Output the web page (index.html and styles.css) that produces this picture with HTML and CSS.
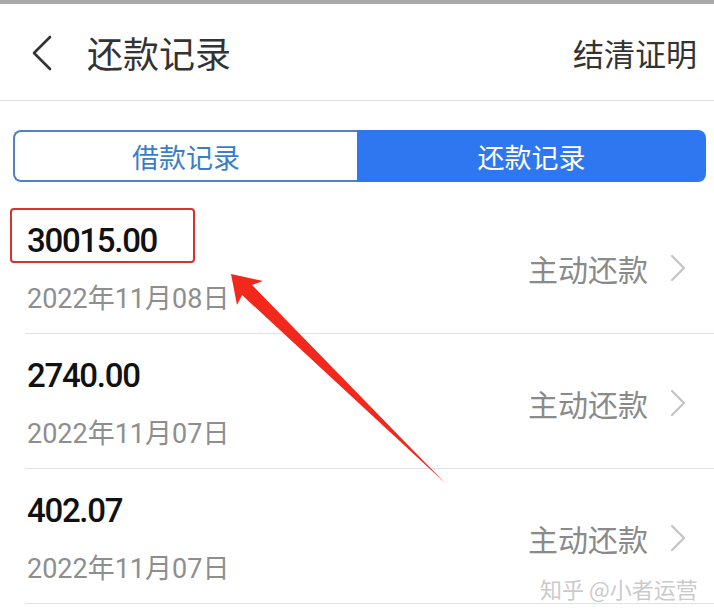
FILE: index.html
```html
<!DOCTYPE html>
<html lang="zh-CN">
<head>
<meta charset="utf-8">
<title>还款记录</title>
<link rel="stylesheet" href="styles.css">
</head>
<body>
<div class="page">
  <div class="topstrip"></div>
  <header class="header">
    <svg class="back" width="22" height="36" viewBox="0 0 22 36"><polyline points="19,2 3,18 19,34" fill="none" stroke="#333" stroke-width="2.6" stroke-linecap="round" stroke-linejoin="round"/></svg>
    <h1 class="title">还款记录</h1>
    <span class="action">结清证明</span>
  </header>
  <div class="tabs">
    <div class="tab tab-off">借款记录</div>
    <div class="tab tab-on">还款记录</div>
  </div>
  <ul class="list">
    <li class="row">
      <div class="info">
        <div class="amount">30015.00<span class="mark"></span></div>
        <div class="date">2022年11月08日</div>
      </div>
      <div class="type">主动还款<svg class="chev" width="18" height="28" viewBox="0 0 18 28"><polyline points="3,2 15,14 3,26" fill="none" stroke="#c3c3c3" stroke-width="2.2" stroke-linecap="round" stroke-linejoin="round"/></svg></div>
    </li>
    <li class="row">
      <div class="info">
        <div class="amount">2740.00</div>
        <div class="date">2022年11月07日</div>
      </div>
      <div class="type">主动还款<svg class="chev" width="18" height="28" viewBox="0 0 18 28"><polyline points="3,2 15,14 3,26" fill="none" stroke="#c3c3c3" stroke-width="2.2" stroke-linecap="round" stroke-linejoin="round"/></svg></div>
    </li>
    <li class="row">
      <div class="info">
        <div class="amount">402.07</div>
        <div class="date">2022年11月07日</div>
      </div>
      <div class="type">主动还款<svg class="chev" width="18" height="28" viewBox="0 0 18 28"><polyline points="3,2 15,14 3,26" fill="none" stroke="#c3c3c3" stroke-width="2.2" stroke-linecap="round" stroke-linejoin="round"/></svg></div>
    </li>
  </ul>
  <div class="watermark">知乎 @小者运营</div>
  <svg class="arrow" width="714" height="615" viewBox="0 0 714 615"><polygon points="231,274 263,281 252,285 445,483 242,295 237,305" fill="#f2281d"/></svg>
</div>
</body>
</html>
```
FILE: styles.css
```css
* { box-sizing: border-box; }
html, body { margin: 0; padding: 0; background: #fff; }
body {
  font-family: Roboto, "Noto Sans CJK SC", sans-serif;
  color: #333;
}
.page {
  position: relative;
  width: 714px;
  height: 615px;
  overflow: hidden;
}
.topstrip {
  height: 4px;
  background: #a9a9a9;
}
.header {
  height: 97px;
  display: flex;
  align-items: center;
  padding: 0 17px 0 31px;
  border-bottom: 1px solid #dedede;
}
.back { display: block; margin-top: 2px; }
.title {
  margin: 0 0 0 34px;
  font-size: 36px;
  font-weight: 400;
  color: #333;
  flex: 1;
}
.action {
  font-size: 31px;
  color: #333;
}
.tabs {
  display: flex;
  height: 52px;
  margin: 29px 8px 0 13px;
}
.tab {
  flex: 1;
  display: flex;
  align-items: center;
  justify-content: center;
  font-size: 27px;
}
.tab-off {
  flex: 0 0 344px;
  border: 2px solid #4f84c2;
  border-right: none;
  border-radius: 8px 0 0 8px;
  color: #3c7dc8;
  background: #fff;
}
.tab-on {
  background: #2f77f1;
  color: #fff;
  border-radius: 0 8px 8px 0;
}
.list {
  list-style: none;
  margin: 17px 0 0 25px;
  padding: 0;
}
.row {
  height: 135px;
  display: flex;
  align-items: center;
  justify-content: space-between;
  padding: 22px 27px 18px 2px;
  border-bottom: 1px solid #e2e2e2;
}
.info { display: flex; flex-direction: column; }
.amount {
  position: relative;
  font-size: 33px;
  font-weight: 500;
  line-height: 40px;
  letter-spacing: -1.3px;
  color: #111;
}
.mark {
  position: absolute;
  left: -17px;
  top: -13px;
  width: 185px;
  height: 55px;
  border: 2px solid #d9312b;
  border-radius: 4px;
}
.date {
  margin-top: 22px;
  font-size: 27px;
  line-height: 32px;
  color: #8e8e8e;
}
.type {
  display: flex;
  align-items: center;
  font-size: 30px;
  color: #8a8a8a;
}
.chev { display: block; margin-left: 21px; }
.watermark {
  position: absolute;
  left: 540px;
  top: 572px;
  font-size: 22px;
  color: #cbcbcb;
  font-family: "Noto Sans CJK SC", sans-serif;
}
.arrow {
  position: absolute;
  left: 0;
  top: 0;
  pointer-events: none;
}
```
